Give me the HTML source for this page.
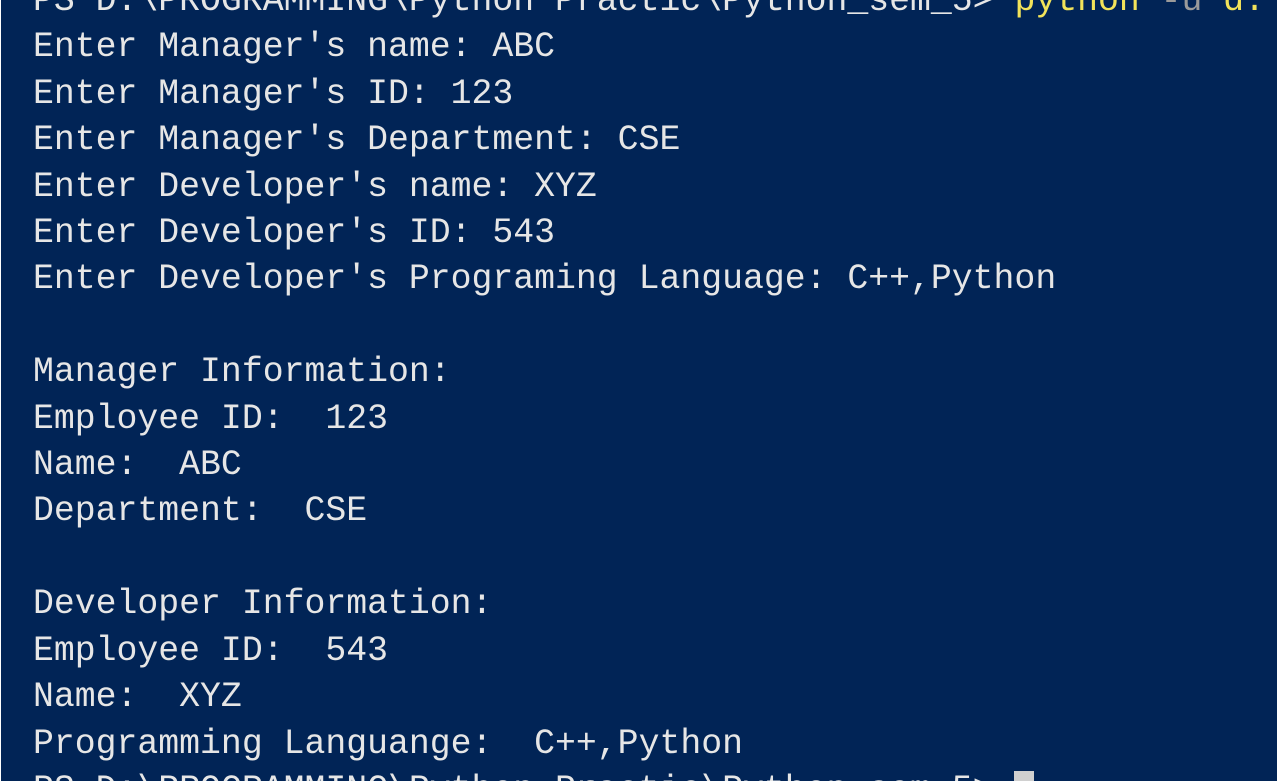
<!DOCTYPE html>
<html><head><meta charset="utf-8"><style>
html,body{margin:0;padding:0;width:1280px;height:781px;overflow:hidden;background:#fff}
.t{position:absolute;left:1px;top:0;width:1276px;height:781px;background:#012456;overflow:hidden}
pre{margin:0;position:absolute;left:32px;top:-21px;font-family:"Liberation Mono",monospace;font-size:34.8px;line-height:46.4px;color:#e6e6e6;white-space:pre;}
.y{color:#f2e35a}.g{color:#9a9a9a}
.c{display:inline-block;width:20px;height:36px;background:#d0d0d0;vertical-align:-8px}
</style></head><body><div class="t"><pre>PS D:\PROGRAMMING\Python Practic\Python_sem_5> <span class="y">python</span> <span class="g">-u</span> <span class="y">d:</span>
Enter Manager's name: ABC
Enter Manager's ID: 123
Enter Manager's Department: CSE
Enter Developer's name: XYZ
Enter Developer's ID: 543
Enter Developer's Programing Language: C++,Python

Manager Information:
Employee ID:  123
Name:  ABC
Department:  CSE

Developer Information:
Employee ID:  543
Name:  XYZ
Programming Languange:  C++,Python
PS D:\PROGRAMMING\Python Practic\Python_sem_5> <span class="c"></span></pre></div></body></html>
